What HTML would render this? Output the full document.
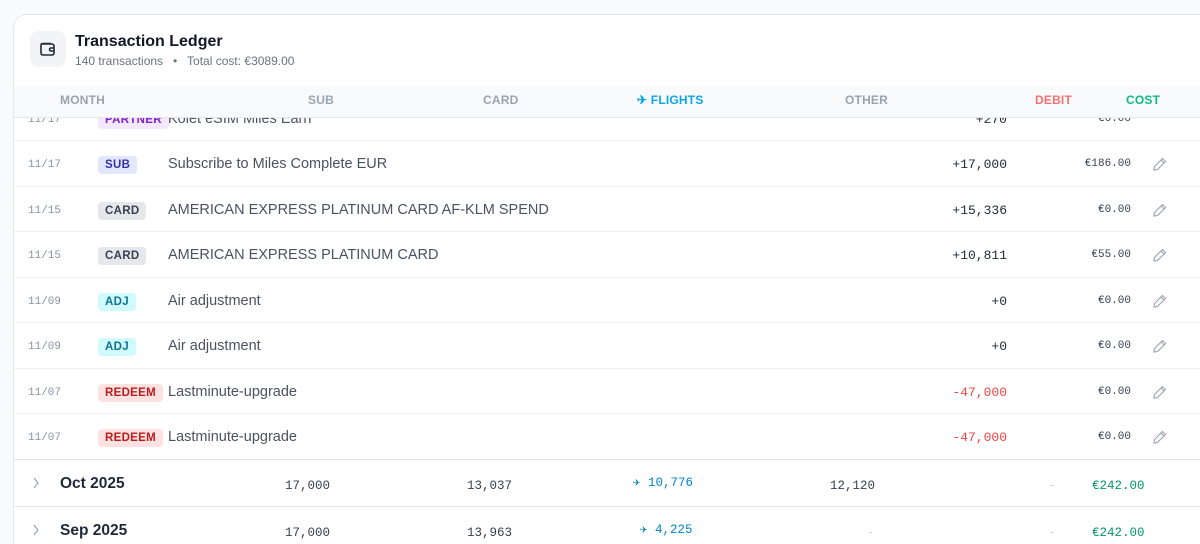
<!DOCTYPE html>
<html><head><meta charset="utf-8"><style>
*{margin:0;padding:0;box-sizing:border-box}
html,body{width:1200px;height:544px;overflow:hidden}
body{background:#f8fafc;font-family:"Liberation Sans",sans-serif;position:relative}
.card{position:absolute;left:13px;top:14px;width:1187px;height:530px;background:#fff;border:1px solid #e5e7eb;border-right:none;border-bottom:none;border-radius:14px 0 0 0;overflow:hidden}
.a{position:absolute;white-space:nowrap}
.mono{font-family:"Liberation Mono",monospace}
.row{position:absolute;left:0;width:1187px;height:45px;border-bottom:1px solid #eef0f3}
.d{position:absolute;left:14px;top:18px;font-size:11px;color:#8a93a3}
.b{position:absolute;left:84px;top:15px;font-size:11.5px;font-weight:bold;padding:3px 7px;border-radius:4px;letter-spacing:.3px}
.t{position:absolute;left:154px;top:15px;font-size:14.5px;color:#4b5261}
.n{position:absolute;right:194px;top:16px;font-size:13px;color:#1f2937}
.c{position:absolute;right:70px;top:17px;font-size:11px;color:#374151}
.p{position:absolute;left:1138px;top:15px}
.th{position:absolute;top:7px;font-size:12px;font-weight:bold;color:#9aa3b2;letter-spacing:.2px}
.mr{position:absolute;left:0;width:1187px;height:47px;border-top:1px solid #e2e5ea;background:#fff}
.mv{position:absolute;top:19px;font-size:12.5px;color:#374151}
</style></head><body>
<div class="card">
 <svg width="0" height="0" style="position:absolute"><defs><g id="pen"><path d="M10.5 2.5l3 3-8 8-3.6.6.6-3.6z M9 4l3 3" fill="none" stroke="#9aa1ac" stroke-width="1.1" stroke-linejoin="round"/></g></defs></svg>
 <div class="row" style="top:81px;"><span class="d mono">11/17</span><span class="b" style="background:#f3e8ff;color:#7e22ce">PARTNER</span><span class="t">Kolet eSIM Miles Earn</span><span class="n mono">+270</span><span class="c mono">€0.00</span></div>
 <div class="row" style="top:126px;height:46px"><span class="d mono">11/17</span><span class="b" style="background:#e0e7ff;color:#3730a3">SUB</span><span class="t">Subscribe to Miles Complete EUR</span><span class="n mono">+17,000</span><span class="c mono">€186.00</span><svg class="p" width="16" height="16"><use href="#pen"/></svg></div>
 <div class="row" style="top:172px"><span class="d mono">11/15</span><span class="b" style="background:#e5e7eb;color:#374151">CARD</span><span class="t">AMERICAN EXPRESS PLATINUM CARD AF-KLM SPEND</span><span class="n mono">+15,336</span><span class="c mono">€0.00</span><svg class="p" width="16" height="16"><use href="#pen"/></svg></div>
 <div class="row" style="top:217px;height:46px"><span class="d mono">11/15</span><span class="b" style="background:#e5e7eb;color:#374151">CARD</span><span class="t">AMERICAN EXPRESS PLATINUM CARD</span><span class="n mono">+10,811</span><span class="c mono">€55.00</span><svg class="p" width="16" height="16"><use href="#pen"/></svg></div>
 <div class="row" style="top:263px"><span class="d mono">11/09</span><span class="b" style="background:#cffafe;color:#0e7490">ADJ</span><span class="t">Air adjustment</span><span class="n mono">+0</span><span class="c mono">€0.00</span><svg class="p" width="16" height="16"><use href="#pen"/></svg></div>
 <div class="row" style="top:308px;height:46px"><span class="d mono">11/09</span><span class="b" style="background:#cffafe;color:#0e7490">ADJ</span><span class="t">Air adjustment</span><span class="n mono">+0</span><span class="c mono">€0.00</span><svg class="p" width="16" height="16"><use href="#pen"/></svg></div>
 <div class="row" style="top:354px"><span class="d mono">11/07</span><span class="b" style="background:#fee2e2;color:#b91c1c">REDEEM</span><span class="t">Lastminute-upgrade</span><span class="n mono" style="color:#ef4444">-47,000</span><span class="c mono">€0.00</span><svg class="p" width="16" height="16"><use href="#pen"/></svg></div>
 <div class="row" style="top:399px;height:45px;border-bottom:none"><span class="d mono">11/07</span><span class="b" style="background:#fee2e2;color:#b91c1c">REDEEM</span><span class="t">Lastminute-upgrade</span><span class="n mono" style="color:#ef4444">-47,000</span><span class="c mono">€0.00</span><svg class="p" width="16" height="16"><use href="#pen"/></svg></div>

 <div class="mr" style="top:444px">
  <svg class="a" style="left:18px;top:17px" width="8" height="12"><path d="M2 1l4 5-4 5" fill="none" stroke="#9aa1ac" stroke-width="1.2"/></svg>
  <span class="a" style="left:46px;top:15px;font-size:15.5px;font-weight:bold;color:#1f2937">Oct 2025</span>
  <span class="mv mono" style="left:271px">17,000</span><span class="mv mono" style="left:453px">13,037</span>
  <span class="mv mono" style="left:619px;top:14px;color:#0284c7">✈ 10,776</span>
  <span class="mv mono" style="left:816px">12,120</span>
  <span class="mv mono" style="left:1034px;color:#cbd2da">-</span>
  <span class="mv mono" style="left:1078px;color:#059669">€242.00</span>
 </div>
 <div class="mr" style="top:491px;height:39px">
  <svg class="a" style="left:18px;top:17px" width="8" height="12"><path d="M2 1l4 5-4 5" fill="none" stroke="#9aa1ac" stroke-width="1.2"/></svg>
  <span class="a" style="left:46px;top:15px;font-size:15.5px;font-weight:bold;color:#1f2937">Sep 2025</span>
  <span class="mv mono" style="left:271px">17,000</span><span class="mv mono" style="left:453px">13,963</span>
  <span class="mv mono" style="left:626px;top:14px;color:#0284c7">✈ 4,225</span>
  <span class="mv mono" style="left:853px;color:#cbd2da">-</span>
  <span class="mv mono" style="left:1034px;color:#cbd2da">-</span>
  <span class="mv mono" style="left:1078px;color:#059669">€242.00</span>
 </div>

 <div class="a" style="left:0;top:0;width:1187px;height:71px;background:#fff"></div>
 <div class="a" style="left:16px;top:16px;width:36px;height:36px;border-radius:9px;background:#f3f4f6"></div>
 <svg class="a" style="left:24px;top:24px" width="20" height="20" viewBox="0 0 20 20"><path d="M4 5h10a2 2 0 0 1 2 2v7a2 2 0 0 1-2 2H5a2 2 0 0 1-2-2V6a1.5 1.5 0 0 1 1.5-1.5H13" fill="none" stroke="#1f2937" stroke-width="1.6"/><path d="M16 9h-3a1.5 1.5 0 0 0 0 3h3" fill="none" stroke="#1f2937" stroke-width="1.6"/></svg>
 <span class="a" style="left:61px;top:18px;font-size:16px;font-weight:bold;color:#111827">Transaction Ledger</span>
 <span class="a" style="left:61px;top:39px;font-size:12px;color:#6b7280">140 transactions &nbsp;&nbsp;•&nbsp;&nbsp; Total cost: €3089.00</span>
 <div class="a" style="left:0;top:71px;width:1187px;height:32px;background:#f8fafc;border-bottom:1px solid #e5e7eb">
  <span class="th" style="left:46px">MONTH</span>
  <span class="th" style="left:294px">SUB</span>
  <span class="th" style="left:469px">CARD</span>
  <span class="th" style="left:623px;color:#0ea5e9">✈ FLIGHTS</span>
  <span class="th" style="left:831px">OTHER</span>
  <span class="th" style="left:1021px;color:#f87171">DEBIT</span>
  <span class="th" style="left:1112px;color:#10b981">COST</span>
 </div>
</div>
</body></html>
